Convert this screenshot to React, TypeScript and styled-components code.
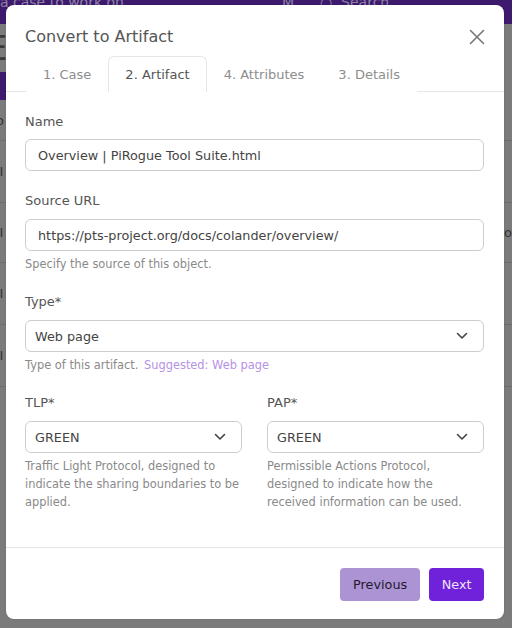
import React from "react";
import styled, { createGlobalStyle } from "styled-components";

const Global = createGlobalStyle`
  html, body { margin: 0; padding: 0; }
  body {
    width: 512px; height: 628px; overflow: hidden;
    font-family: "DejaVu Sans", "Liberation Sans", sans-serif;
    background: #7b7b7b;
  }
  * { box-sizing: border-box; }
`;

const Page = styled.div`
  position: relative;
  width: 512px;
  height: 628px;
  overflow: hidden;
  background: #7b7b7b;
`;

const TopBar = styled.div`
  height: 24px;
  background: #3e1a6f;
  display: flex;
  align-items: flex-start;
  color: #8f83a3;
  font-size: 14px;
  line-height: 8px;
  overflow: hidden;
`;

const TopText = styled.span<{ $w: number }>`
  width: ${(p) => p.$w}px;
  flex: none;
  margin-top: -2px;
`;

const Sep = styled.span`
  width: 1px;
  height: 24px;
  background: #5a3d85;
  margin: 0 14px 0 0;
`;

const BgHeading = styled.div`
  height: 48px;
  font-size: 34px;
  line-height: 48px;
  color: #3a3a3a;
  margin-left: -14px;
`;

const BgStrip = styled.div`
  height: 28px;
  background: #3e1a6f;
  width: 40px;
`;

const BgRow = styled.div<{ $h: number }>`
  height: ${(p) => p.$h}px;
  border-bottom: 1px solid #6d6d6d;
  color: #333;
  font-size: 13px;
  display: flex;
  align-items: center;
  justify-content: space-between;
  margin-left: -4px;
`;

const Overlay = styled.div`
  position: absolute;
  left: 6px;
  top: 5px;
  width: 498px;
  height: 614px;
  background: #fff;
  border-radius: 8px;
  display: flex;
  flex-direction: column;
  box-shadow: 0 0 2px rgba(0,0,0,0.15);
`;

const Header = styled.div`
  display: flex;
  align-items: center;
  justify-content: space-between;
  padding: 21px 18px 0 19px;
`;

const Title = styled.h2`
  margin: 0;
  font-size: 16px;
  font-weight: 400;
  line-height: 22px;
  color: #555;
`;

const Close = styled.button`
  border: 0;
  background: none;
  padding: 0;
  width: 18px;
  height: 18px;
  display: flex;
  align-items: center;
  justify-content: center;
  cursor: pointer;
`;

const Tabs = styled.div`
  display: flex;
  margin-top: 8px;
  padding-left: 20px;
  border-bottom: 1px solid #e6e6e6;
`;

const Tab = styled.div<{ $active?: boolean }>`
  padding: 8px 16px;
  font-size: 13px;
  line-height: 19px;
  color: ${(p) => (p.$active ? "#555" : "#8d8d8d")};
  border: 1px solid ${(p) => (p.$active ? "#e6e6e6" : "transparent")};
  border-bottom: none;
  border-radius: 6px 6px 0 0;
  margin-bottom: -1px;
  background: #fff;
`;

const Body = styled.div`
  flex: 1;
  padding: 21px 20px 0 19px;
  display: flex;
  flex-direction: column;
`;

const Field = styled.div<{ $gap?: number }>`
  display: flex;
  flex-direction: column;
  margin-bottom: ${(p) => p.$gap ?? 20}px;
  min-width: 0;
`;

const Label = styled.label<{ $gap?: number }>`
  font-size: 13px;
  line-height: 18px;
  color: #555;
  margin-bottom: ${(p) => p.$gap ?? 9}px;
`;

const Input = styled.div`
  height: 32px;
  border: 1px solid #cdcdcd;
  border-radius: 6px;
  padding: 0 12px;
  display: flex;
  align-items: center;
  font-size: 12.8px;
  color: #444;
  white-space: nowrap;
`;

const Select = styled(Input)`
  padding: 0 15px 0 9px;
  justify-content: space-between;
`;

const Help = styled.div`
  margin-top: 4px;
  font-size: 11.4px;
  line-height: 18px;
  color: #8a8a8a;
`;

const Link = styled.span`
  color: #b592e4;
  margin-left: 2px;
`;

const Row = styled.div`
  display: grid;
  grid-template-columns: 1fr 1fr;
  column-gap: 25px;
`;

const Footer = styled.div`
  border-top: 1px solid #e6e6e6;
  padding: 20px 20px 18px;
  display: flex;
  justify-content: flex-end;
  gap: 9px;
`;

const Button = styled.button<{ $primary?: boolean }>`
  height: 33px;
  border: 0;
  border-radius: 4px;
  padding: 0 ${(p) => (p.$primary ? 12.5 : 13)}px;
  font-family: inherit;
  font-size: 12.8px;
  background: ${(p) => (p.$primary ? "#7022da" : "#ac93d4")};
  color: ${(p) => (p.$primary ? "#ece4f7" : "#1f1a2c")};
`;

const Chevron = () => (
  <svg width="12" height="8" viewBox="0 0 12 8" fill="none">
    <path d="M1.5 1.5 L6 6 L10.5 1.5" stroke="#444" strokeWidth="1.6" strokeLinecap="round" strokeLinejoin="round" />
  </svg>
);

export default function App() {
  return (
    <Page>
      <Global />
      <TopBar>
        <TopText $w={282}>a case to work on</TopText>
        <TopText $w={24}>M</TopText>
        <Sep />
        <TopText $w={200}>○ &nbsp;Search</TopText>
      </TopBar>
      <BgHeading>Ep</BgHeading>
      <BgStrip />
      <BgRow $h={41}>o</BgRow>
      <BgRow $h={62}>'I</BgRow>
      <BgRow $h={60}>'I<span>o</span></BgRow>
      <BgRow $h={62}>'I</BgRow>
      <BgRow $h={62}>'I</BgRow>

      <Overlay>
        <Header>
          <Title>Convert to Artifact</Title>
          <Close aria-label="Close">
            <svg width="16" height="16" viewBox="0 0 16 16">
              <path d="M1.5 1.5 L14.5 14.5 M14.5 1.5 L1.5 14.5" stroke="#777" strokeWidth="1.6" strokeLinecap="round" />
            </svg>
          </Close>
        </Header>
        <Tabs>
          <Tab>1. Case</Tab>
          <Tab $active>2. Artifact</Tab>
          <Tab>4. Attributes</Tab>
          <Tab>3. Details</Tab>
        </Tabs>
        <Body>
          <Field $gap={21}>
            <Label $gap={8}>Name</Label>
            <Input>Overview | PiRogue Tool Suite.html</Input>
          </Field>
          <Field>
            <Label>Source URL</Label>
            <Input>https://pts-project.org/docs/colander/overview/</Input>
            <Help>Specify the source of this object.</Help>
          </Field>
          <Field>
            <Label>Type*</Label>
            <Select>
              <span>Web page</span>
              <Chevron />
            </Select>
            <Help>
              Type of this artifact. <Link>Suggested: Web page</Link>
            </Help>
          </Field>
          <Row>
            <Field $gap={0}>
              <Label>TLP*</Label>
              <Select>
                <span>GREEN</span>
                <Chevron />
              </Select>
              <Help>Traffic Light Protocol, designed to indicate the sharing boundaries to be applied.</Help>
            </Field>
            <Field $gap={0}>
              <Label>PAP*</Label>
              <Select>
                <span>GREEN</span>
                <Chevron />
              </Select>
              <Help>Permissible Actions Protocol, designed to indicate how the received information can be used.</Help>
            </Field>
          </Row>
        </Body>
        <Footer>
          <Button>Previous</Button>
          <Button $primary>Next</Button>
        </Footer>
      </Overlay>
    </Page>
  );
}
